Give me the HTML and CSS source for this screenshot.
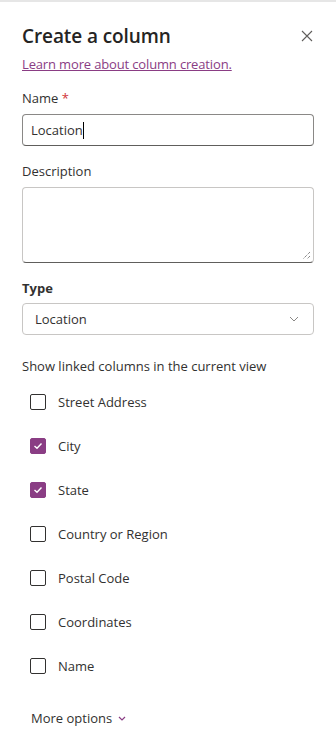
FILE: index.html
```html
<!DOCTYPE html>
<html lang="en">
<head>
    <meta charset="UTF-8">
    <meta name="viewport" content="width=device-width, initial-scale=1.0">
    <title>Create a column</title>
    <link rel="stylesheet" href="styles.css">
</head>
<body>
    <div class="panel">
        <header class="panel-head">
            <h1>Create a column</h1>
            <button class="close" aria-label="Close">
                <svg width="12" height="12" viewBox="0 0 12 12"><path d="M1 1L11 11M11 1L1 11" stroke="#605e5c" stroke-width="1.1" fill="none"/></svg>
            </button>
        </header>
        <a class="learn" href="#">Learn more about column creation.</a>

        <label class="field-label" for="name">Name <span class="req">*</span></label>
        <div class="text-box"><span class="value">Location</span><span class="caret"></span></div>

        <label class="field-label desc-label" for="desc">Description</label>
        <div class="text-area">
            <svg class="grip" width="9" height="9" viewBox="0 0 9 9"><path d="M8 1L1 8M8 5L5 8" stroke="#555" stroke-width="1" stroke-dasharray="1 1"/></svg>
        </div>

        <div class="field-label type-label">Type</div>
        <div class="dropdown">
            <span>Location</span>
            <svg width="10" height="6" viewBox="0 0 10 6"><path d="M1 1L5 5L9 1" stroke="#8a8886" stroke-width="1" fill="none"/></svg>
        </div>

        <p class="linked-title">Show linked columns in the current view</p>

        <ul class="checks">
            <li><span class="box"></span>Street Address</li>
            <li><span class="box on"><svg width="10" height="8" viewBox="0 0 10 8"><path d="M1.5 4L4 6.3L8.5 1.5" stroke="#fff" stroke-width="1.4" fill="none"/></svg></span>City</li>
            <li><span class="box on"><svg width="10" height="8" viewBox="0 0 10 8"><path d="M1.5 4L4 6.3L8.5 1.5" stroke="#fff" stroke-width="1.4" fill="none"/></svg></span>State</li>
            <li><span class="box"></span>Country or Region</li>
            <li><span class="box"></span>Postal Code</li>
            <li><span class="box"></span>Coordinates</li>
            <li><span class="box"></span>Name</li>
        </ul>

        <div class="more">More options
            <svg width="8" height="5" viewBox="0 0 8 5"><path d="M1 1L4 4L7 1" stroke="#8a3d84" stroke-width="1.2" fill="none"/></svg>
        </div>
    </div>
</body>
</html>
```
FILE: styles.css
```css
body {
    margin: 0;
    font-family: "Open Sans", "Noto Sans", sans-serif;
    color: #323130;
    background-color: #fff;
}

.panel {
    border-top: 2px solid #e6e6e6;
    margin-top: 0;
    padding: 0 22px 0 22px;
    display: flex;
    flex-direction: column;
    height: 740px;
}

.panel-head {
    display: flex;
    justify-content: space-between;
    align-items: center;
    margin-top: 20px;
    height: 28px;
}

h1 {
    margin: 0;
    font-size: 19px;
    font-weight: 600;
    color: #252423;
    letter-spacing: -0.1px;
}

.close {
    background: none;
    border: none;
    padding: 0;
    margin-right: 0;
    width: 14px;
    display: flex;
    justify-content: center;
}

.learn {
    margin-top: 5px;
    font-size: 13px;
    color: #8a3d84;
    text-decoration: underline;
    line-height: 18px;
    letter-spacing: -0.15px;
}

.field-label {
    font-size: 13px;
    color: #323130;
    line-height: 18px;
    margin-top: 16px;
    margin-bottom: 7px;
}

.req {
    color: #d13438;
}

.text-box {
    height: 30px;
    border: 1px solid #8a8886;
    border-bottom-color: #605e5c;
    border-radius: 4px;
    display: flex;
    align-items: center;
    padding: 0 8px;
    font-size: 13px;
}

.caret {
    width: 1px;
    height: 17px;
    background-color: #000;
}

.desc-label {
    margin-top: 16px;
}

.text-area {
    height: 74px;
    border: 1px solid #c8c6c4;
    border-bottom-color: #605e5c;
    border-radius: 4px;
    position: relative;
}

.grip {
    position: absolute;
    right: 2px;
    bottom: 2px;
}

.type-label {
    font-weight: 700;
    margin-top: 16px;
    margin-bottom: 6px;
}

.dropdown {
    height: 30px;
    border: 1px solid #c8c6c4;
    border-radius: 4px;
    display: flex;
    justify-content: space-between;
    align-items: center;
    padding: 0 14px 0 12px;
    font-size: 13px;
    color: #323130;
}

.linked-title {
    margin: 22px 0 0 0;
    font-size: 13px;
    line-height: 18px;
}

.checks {
    list-style: none;
    margin: 17px 0 0 0;
    padding: 0 0 0 8px;
    display: flex;
    flex-direction: column;
    gap: 24px;
}

.checks li {
    display: flex;
    align-items: center;
    height: 20px;
    font-size: 13px;
    gap: 12px;
}

.box {
    width: 14px;
    height: 14px;
    border: 1px solid #323130;
    border-radius: 2px;
    display: flex;
    align-items: center;
    justify-content: center;
}

.box.on {
    background-color: #8a3d84;
    border-color: #8a3d84;
}

.more {
    margin-top: 33px;
    margin-left: 9px;
    font-size: 13px;
    color: #323130;
    display: flex;
    align-items: center;
    gap: 6px;
}
```
